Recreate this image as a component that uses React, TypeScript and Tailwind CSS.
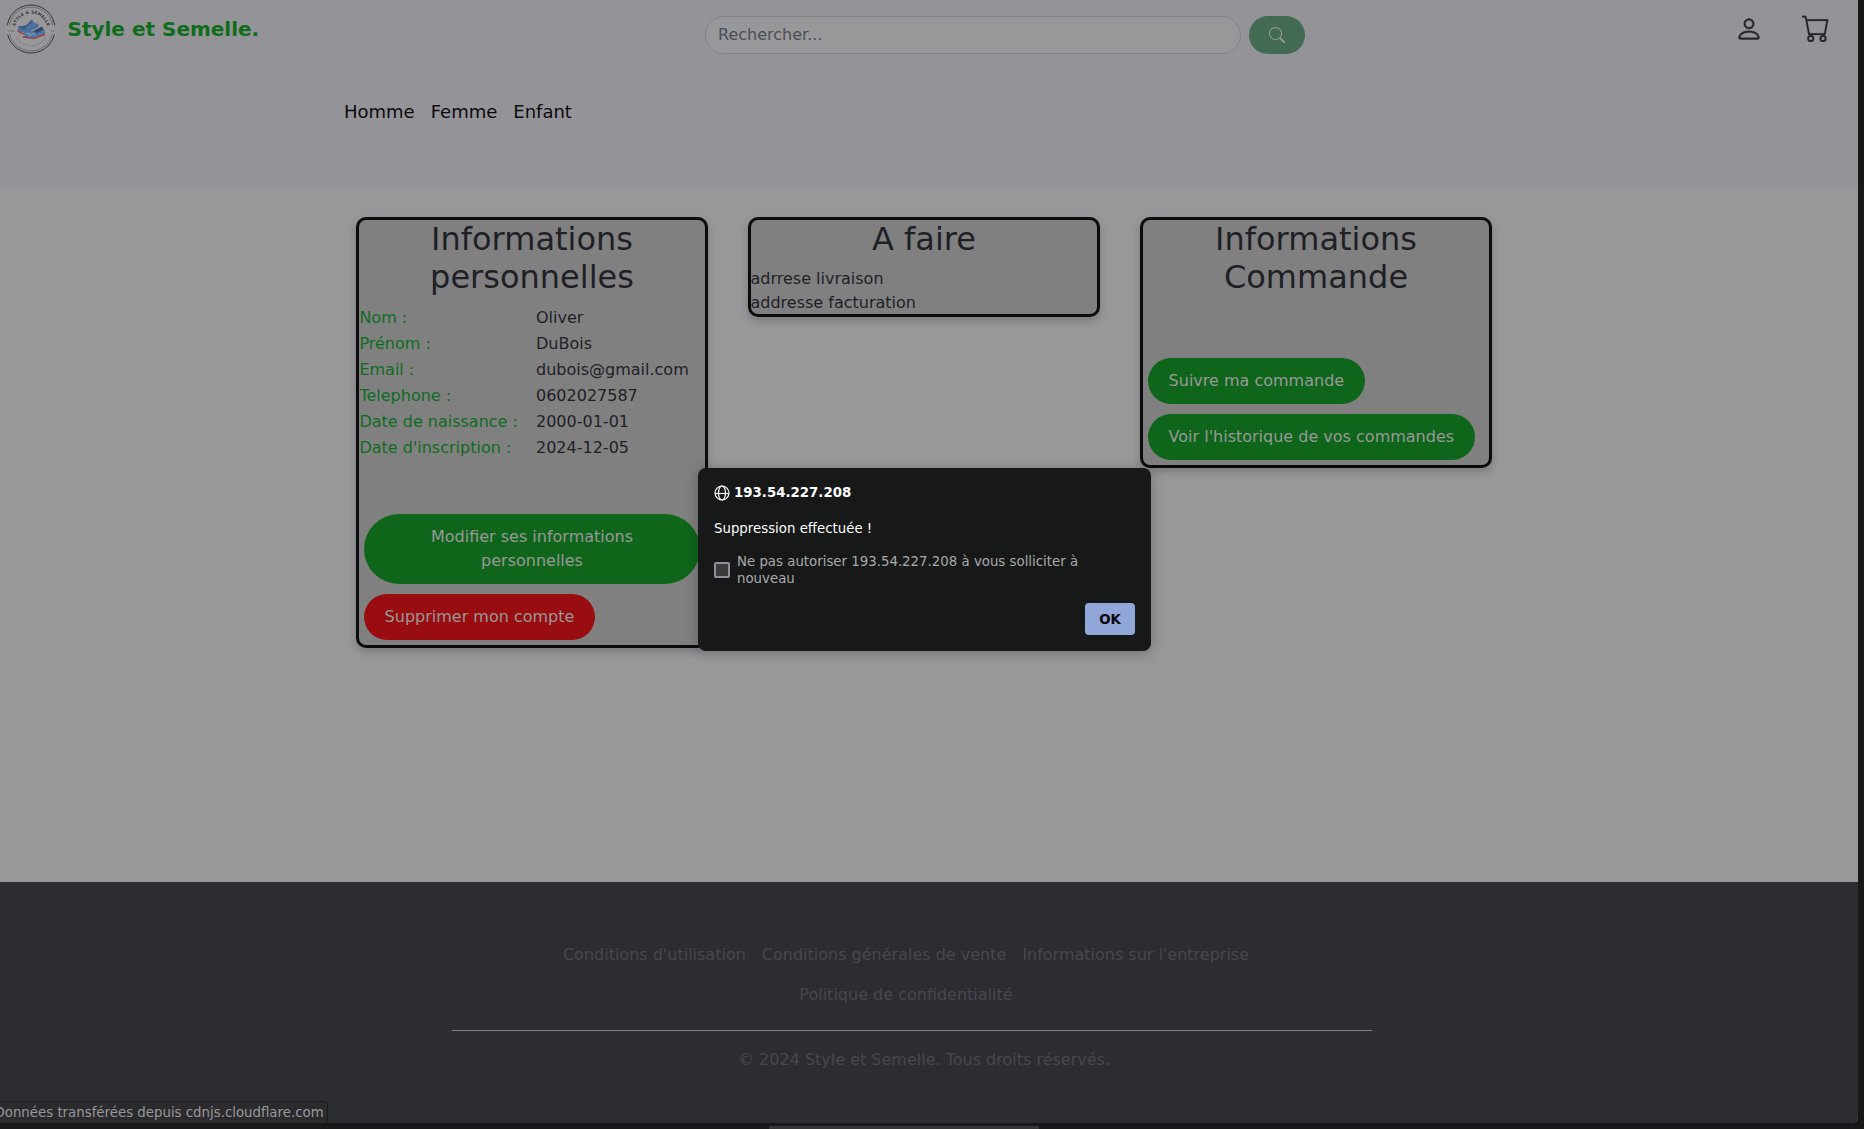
import React from "react";
import { BsCart, BsPerson, BsSearch } from "react-icons/bs";

const details = [
  ["Nom :", "Oliver"],
  ["Prénom :", "DuBois"],
  ["Email :", "dubois@gmail.com"],
  ["Telephone :", "0602027587"],
  ["Date de naissance :", "2000-01-01"],
  ["Date d'inscription :", "2024-12-05"],
];

function Logo() {
  return (
    <svg viewBox="0 0 52 52" className="h-[52px] w-[52px]" aria-label="Style & Semelle">
      <defs>
        <path id="topArc" d="M9.600 27a16.400 16.400 0 0 1 32.800 0" />
        <path id="bottomArc" d="M8.500 26a17.500 17.500 0 0 0 35 0" />
      </defs>
      <circle cx="26" cy="26" r="24" fill="#98989a" stroke="#35353f" strokeWidth="1" />
      <circle cx="26" cy="26" r="22" fill="none" stroke="#56565f" strokeWidth=".7" />
      <rect x="0" y="22.500" width="52" height="9" fill="#98989a" />
      <path d="M2.500 28h7M46 28h3.500" stroke="#66666e" strokeWidth=".8" />
      <text fontSize="4.200" fontWeight="bold" fill="#34343d" letterSpacing=".1">
        <textPath href="#topArc" startOffset="50%" textAnchor="middle">STYLE &amp; SEMELLE</textPath>
      </text>
      <text fontSize="2.200" fill="#5d5d66" letterSpacing=".6">
        <textPath href="#bottomArc" startOffset="50%" textAnchor="middle">POUR VOS CHAUSSURES</textPath>
      </text>
      <path d="M13 23.500l8-1 6-6 2.500 3.500 4 1v3l-12 6-8.500-2z" fill="#496f9c" />
      <path d="M13 23.500l8-1 6-6-1 5-7 5z" fill="#38587f" />
      <path d="M12.500 27l7 3.500 4-1v2h-5l-6-2.500z" fill="#9c4148" />
      <path d="M19 29l9-1 9-4.500 1.500 3 1.500.5v4l-9 4-11-.5z" fill="#4e76a5" />
      <path d="M28 28.500l9-5 1.500 3-6 3.500z" fill="#33465f" />
      <path d="M18 33l10 2 12-4.500v1.700L29 36.300l-11-1.500z" fill="#a24046" />
      <path d="M23 21l3 2M21 23l3 2" stroke="#8b9db5" strokeWidth=".6" />
      <path d="M21 31l3-1 1 3 3-3 2 2" fill="none" stroke="#a0adbc" strokeWidth=".8" />
    </svg>
  );
}

function GlobeIcon() {
  return (
    <svg viewBox="0 0 16 16" className="h-4 w-4 shrink-0" fill="none" stroke="currentColor" strokeWidth="1.200">
      <circle cx="8" cy="8" r="7" />
      <ellipse cx="8" cy="8" rx="3.500" ry="7" />
      <path d="M1 8.500h14" />
    </svg>
  );
}

function Card({ title, children }: { title: string; children: React.ReactNode }) {
  return (
    <section className="w-[352px] rounded-[10px] border-[3px] border-[#0b0b0d] bg-[#808081] shadow-[0_4px_8px_rgba(0,0,0,0.2)]">
      <h2 className="mb-2 text-center text-[32px] leading-[38.4px] text-[#1f1f26]">{title}</h2>
      {children}
    </section>
  );
}

function Pill({ children, danger = false }: { children: React.ReactNode; danger?: boolean }) {
  return (
    <button
      className={
        "m-[5px] rounded-full px-[20.6px] py-[11px] leading-6 text-[#98989a] " +
        (danger ? "bg-[#990d10]" : "bg-[#0f661a]")
      }
    >
      {children}
    </button>
  );
}

function Header() {
  return (
    <header className="h-[187px] bg-[#949398]">
      <div className="flex h-[68px] items-start">
        <div className="flex w-[705px] items-center pl-[5px] pt-[3px]">
          <Logo />
          <span className="ml-[10.5px] text-[20px] font-bold text-[#0f6c1a]">Style et Semelle.</span>
        </div>
        <form className="flex gap-2 pt-4">
          <input
            placeholder="Rechercher..."
            className="h-[38px] w-[536px] rounded-[20px] border border-[#81848c] bg-[#98989a] px-3 pb-[2px] text-base placeholder:text-[#4a4e57]"
          />
          <button type="button" className="flex h-[38px] w-14 items-center justify-center rounded-[20px] bg-[#436b53] text-[#98989a]">
            <BsSearch size={16} />
          </button>
        </form>
        <div className="ml-auto flex gap-[39px] pr-[28px] pt-[14px] text-[#242428]">
          <BsPerson size={28} className="mt-[0.5px]" strokeWidth={0.2} />
          <BsCart size={28} strokeWidth={0.1} />
        </div>
      </div>
      <nav className="flex gap-4 pl-[344px] pt-[30px] text-[18px] leading-[27px] text-[#0b0b0d]">
        <a>Homme</a>
        <a>Femme</a>
        <a>Enfant</a>
      </nav>
    </header>
  );
}

function Footer() {
  return (
    <footer className="h-[241px] bg-[#2c2d31] pt-[53px] text-[#45484e]">
      <div className="ml-[452px] w-[920px]">
        <div className="mr-3 flex flex-wrap justify-center gap-x-4 px-20 leading-10">
          <a>Conditions d'utilisation</a>
          <a>Conditions générales de vente</a>
          <a>Informations sur l'entreprise</a>
          <a>Politique de confidentialité</a>
        </div>
        <div className="mt-[15px] border-t border-[#828285]" />
        <p className="ml-6 mt-[17px] text-center leading-6">© 2024 Style et Semelle. Tous droits réservés.</p>
      </div>
    </footer>
  );
}

function AlertDialog() {
  return (
    <div
      role="alertdialog"
      className="absolute left-[698px] top-[468px] flex h-[183px] w-[453px] flex-col rounded-lg bg-[#171918] px-4 pt-4 text-[13.33px] leading-[17px] text-[#fbfbfe] shadow-[0_2px_14px_rgba(0,0,0,0.25)]"
    >
      <div className="flex items-center gap-1 font-bold">
        <GlobeIcon />
        193.54.227.208
      </div>
      <p className="mt-[19px]">Suppression effectuée !</p>
      <label className="mt-4 flex items-center gap-[7px] text-[#a9a9ab]">
        <span className="h-4 w-4 shrink-0 rounded-[2px] border-2 border-[#8f8f9d] bg-[#3b3b3b]" />
        <span className="w-[370px]">Ne pas autoriser 193.54.227.208 à vous solliciter à nouveau</span>
      </label>
      <button className="ml-auto mt-4 h-8 w-[50px] rounded bg-[#91a7da] font-bold text-[#060608]">OK</button>
    </div>
  );
}

export default function App() {
  return (
    <div className="relative h-[1129px] w-[1864px] overflow-hidden bg-[#171918] font-['DejaVu_Sans',sans-serif] text-base text-[#1f1f26]">
      <div className="h-[1123px] w-[1858px] overflow-hidden rounded-br-[6px] bg-[#98989a]">
        <Header />
        <main className="flex h-[695px] items-start gap-10 pl-[356px] pt-[30px]">
          <Card title="Informations personnelles">
            <table className="mb-12 border-collapse">
              <tbody>
                {details.map(([label, value]) => (
                  <tr key={label}>
                    <td className="w-[176px] py-px pl-[0.4px] pr-px leading-6 text-[#0f6c1f]">{label}</td>
                    <td className="p-px leading-6">{value}</td>
                  </tr>
                ))}
              </tbody>
            </table>
            <div className="flex flex-col items-start">
              <Pill>Modifier ses informations personnelles</Pill>
              <Pill danger>Supprimer mon compte</Pill>
            </div>
          </Card>
          <Card title="A faire">
            <div className="-ml-[0.5px] -mb-[0.6px] pt-[0.6px] leading-6">
              <p>adrrese livraison</p>
              <p>addresse facturation</p>
            </div>
          </Card>
          <Card title="Informations Commande">
            <div className="mt-14 flex flex-col items-start">
              <Pill>Suivre ma commande</Pill>
              <Pill>Voir l'historique de vos commandes</Pill>
            </div>
          </Card>
        </main>
        <Footer />
      </div>
      <div className="ml-[769px] mt-[3px] h-[3px] w-[270px] bg-[#353535]" />
      <div className="absolute left-0 top-[1101px] h-[22px] w-[328px] overflow-hidden rounded-tr border-r border-t border-[#1d1d20] bg-[#2b2b2e] text-[13.33px] leading-[21px] text-[#98989a]">
        <span className="-ml-[5.5px] whitespace-nowrap">Données transférées depuis cdnjs.cloudflare.com</span>
      </div>
      <AlertDialog />
    </div>
  );
}
